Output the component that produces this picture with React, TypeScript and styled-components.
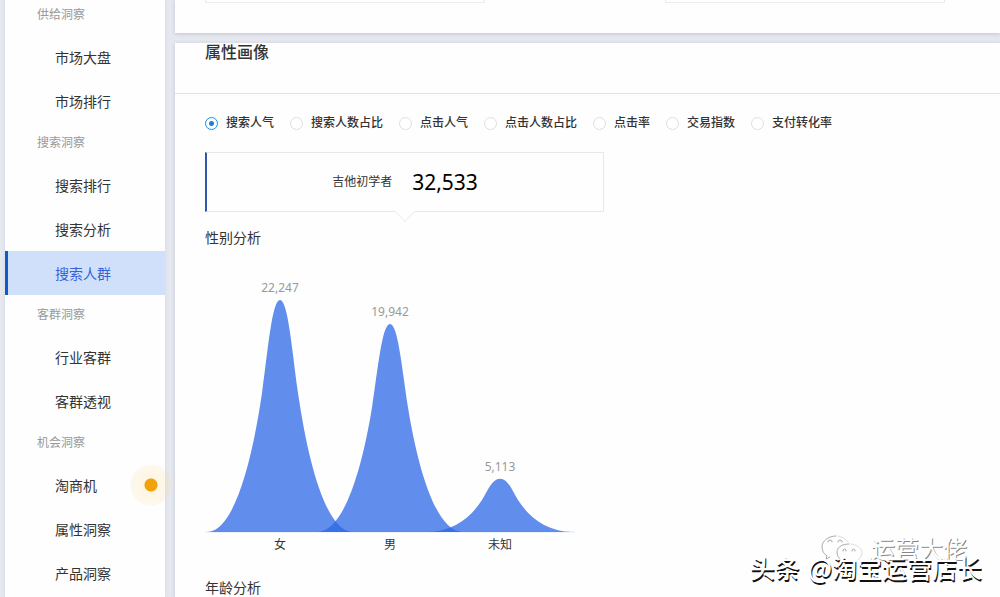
import React, { useState } from "react";
import styled, { createGlobalStyle } from "styled-components";

const GlobalStyle = createGlobalStyle`
  *, *::before, *::after { box-sizing: border-box; }
  body {
    margin: 0;
    background: #e6e8f0;
    color: #333;
    font: 14px/18px "Noto Sans", "Noto Sans CJK SC", sans-serif;
  }
  h2, h3, ul, p, fieldset { margin: 0; padding: 0; }
  ul { list-style: none; }
`;

const Page = styled.div`
  position: relative;
  display: flex;
  gap: 10px;
  min-height: 100vh;
  padding-left: 5px;
  overflow: hidden;
`;

const Sidebar = styled.nav`
  flex: 0 0 160px;
  background: #fefefe;
  box-shadow: 0 0 4px rgba(80, 90, 120, 0.12);
`;

const GroupTitle = styled.p<{ $first?: boolean }>`
  padding: ${(p) => (p.$first ? 5 : 10)}px 0 10px 32px;
  color: #999;
  font-size: 12px;
  line-height: 20px;
`;

const NavLink = styled.a<{ $active?: boolean }>`
  position: relative;
  display: block;
  padding: 2px 0 0 47px;
  border-left: 3px solid ${(p) => (p.$active ? "#0c5bc9" : "transparent")};
  background: ${(p) => (p.$active ? "#d1e0fa" : "transparent")};
  color: ${(p) => (p.$active ? "#3363dc" : "#333")};
  line-height: 42px;
  text-decoration: none;
`;

const NoticeDot = styled.span`
  position: absolute;
  top: 1px;
  right: -7px;
  width: 42px;
  height: 42px;
  border-radius: 50%;
  background: radial-gradient(circle, #f3a108 6px, rgba(250, 205, 100, 0.17) 7px, rgba(250, 215, 130, 0.14) 20px, transparent 21px);
`;

const Main = styled.main`
  flex: 1;
  min-width: 0;
  display: flex;
  flex-direction: column;
  gap: 10px;
`;

const Panel = styled.section`
  background: #fefefe;
  box-shadow: 0 1px 4px rgba(70, 75, 90, 0.22);

  &:last-child { flex: 1; }
`;

const SummaryRow = styled.div`
  display: grid;
  grid-template-columns: 280px 280px;
  gap: 180px;
  padding: 0 30px 30px;
`;

const SummaryBox = styled.div`
  height: 3px;
  border: 1px solid #ebebeb;
  border-top: 0;
`;

const PanelHeader = styled.header`
  padding: 0 30px 32px;
  border-bottom: 1px solid #e3e3e5;
`;

const PanelTitle = styled.h2`
  font-size: 16px;
  font-weight: 500;
  line-height: 18px;
`;

const PanelBody = styled.div`
  padding: 20px 30px 0;
`;

const MetricGroup = styled.fieldset`
  display: flex;
  flex-wrap: wrap;
  gap: 16px;
  margin-bottom: 20px;
  border: 0;
`;

const MetricLabel = styled.label`
  display: flex;
  align-items: center;
  gap: 8px;
  font-size: 12px;
  font-weight: 500;
  white-space: nowrap;
`;

const Radio = styled.input`
  appearance: none;
  width: 13px;
  height: 13px;
  margin: 0;
  border: 1px solid #dedede;
  border-radius: 50%;
  background: #fff;

  &:checked {
    border-color: #2389e0;
    background: radial-gradient(circle, #1c7fdc 2px, #fff 3px);
  }
`;

const CrowdCard = styled.div`
  position: relative;
  display: flex;
  align-items: center;
  justify-content: center;
  gap: 20px;
  max-width: 399px;
  height: 60px;
  margin-bottom: 17px;
  border: 1px solid #e8e8ea;
  border-left: 2px solid #3159ab;

  &::after {
    content: "";
    position: absolute;
    bottom: -8px;
    left: 50%;
    width: 14px;
    height: 14px;
    margin-left: -7px;
    border: solid #eeeef0;
    border-width: 0 1px 1px 0;
    background: #fefefe;
    transform: rotate(45deg);
  }
`;

const CrowdName = styled.span`
  font-size: 12px;
`;

const CrowdValue = styled.strong`
  color: #000;
  font-size: 21px;
  font-weight: 400;
`;

const SectionTitle = styled.h3`
  font-size: 14px;
  font-weight: 400;
  line-height: 18px;
`;

const Chart = styled.svg`
  display: block;
  margin-bottom: 24px;
  font-size: 12px;
  text-anchor: middle;
`;

const Watermark = styled.div`
  position: absolute;
  right: 18px;
  bottom: 15px;
  display: flex;
  gap: 8px;
  color: #fff;
  font-family: "Noto Sans CJK SC", sans-serif;
  font-size: 25px;
  font-weight: 500;
  line-height: 30px;
  white-space: nowrap;
  text-shadow: 1px 2px 0 #111;
`;

const SourceMark = styled.div`
  position: absolute;
  right: 33px;
  bottom: 32px;
  display: flex;
  align-items: center;
  gap: 8px;
  color: #fff;
  font-size: 24px;
  line-height: 30px;
  text-shadow: 1px 1px 0 #888;
`;

type NavGroup = { title: string; items: string[] };

const groups: NavGroup[] = [
  { title: "供给洞察", items: ["市场大盘", "市场排行"] },
  { title: "搜索洞察", items: ["搜索排行", "搜索分析", "搜索人群"] },
  { title: "客群洞察", items: ["行业客群", "客群透视"] },
  { title: "机会洞察", items: ["淘商机", "属性洞察", "产品洞察"] },
];

const metrics = ["搜索人气", "搜索人数占比", "点击人气", "点击人数占比", "点击率", "交易指数", "支付转化率"];

const genders = [
  { name: "女", value: 22247 },
  { name: "男", value: 19942 },
  { name: "未知", value: 5113 },
];

const BASELINE = 285;
const PEAK_HEIGHT = 232;

/* Bell curve centred on cx; the control points are fractions of its height. */
function bell(cx: number, height: number) {
  const y = (depth: number) => BASELINE - height + (depth / PEAK_HEIGHT) * height;
  return [
    `M${cx - 72},${y(232)}`,
    `C${cx - 47},${y(230)} ${cx - 29},${y(168)} ${cx - 18},${y(93)}`,
    `C${cx - 12},${y(50)} ${cx - 8},${y(0)} ${cx},${y(0)}`,
    `C${cx + 8},${y(0)} ${cx + 12},${y(50)} ${cx + 18},${y(93)}`,
    `C${cx + 29},${y(168)} ${cx + 47},${y(230)} ${cx + 72},${y(232)}Z`,
  ].join(" ");
}

function GenderChart() {
  return (
    <Chart width="400" height="308" role="img" aria-label="性别分析">
      <path d={`M0,${BASELINE}H370`} stroke="#a9c0f3" strokeOpacity="0.35" />
      {genders.map((g, i) => {
        const cx = 75 + i * 110;
        const height = (g.value / genders[0].value) * PEAK_HEIGHT;
        return (
          <g key={g.name}>
            <path d={bell(cx, height)} fill="#2a67e5" fillOpacity="0.74" />
            <text x={cx} y={BASELINE - height - 8} fill="#999">{g.value.toLocaleString("en-US")}</text>
            <text x={cx} y={BASELINE + 17} fill="#333">{g.name}</text>
          </g>
        );
      })}
    </Chart>
  );
}

function ChatLogo() {
  return (
    <svg width="42" height="32" viewBox="0 0 42 32" fill="none" stroke="#aaa" strokeLinecap="round" aria-hidden="true">
      <path d="M15 3C7 3 1 8 1 14C1 18 3 21 6 23L5 26L9 24" />
      <path d="M17 3C22 4 25 6 27 9" stroke="#ddd" />
      <path d="M28 11C20 11 16 15 16 19C16 22 17 24 19 26" />
      <path d="M30 11C37 12 41 16 41 20C41 23 39 25 37 27" stroke="#ddd" />
      <path d="M7 9V8Q9 6 11 8V9M17 9V8Q19 6 21 8V9M22 18V17Q24 15 25 17V18M31 18V17Q33 15 34 17V18" />
    </svg>
  );
}

export default function App() {
  const [metric, setMetric] = useState(metrics[0]);

  return (
    <>
      <GlobalStyle />
      <Page>
        <Sidebar>
          {groups.map((group, i) => (
            <div key={group.title}>
              <GroupTitle $first={i === 0}>{group.title}</GroupTitle>
              <ul>
                {group.items.map((item) => (
                  <li key={item}>
                    <NavLink href="#" $active={item === "搜索人群"}>
                      {item}
                      {item === "淘商机" && <NoticeDot />}
                    </NavLink>
                  </li>
                ))}
              </ul>
            </div>
          ))}
        </Sidebar>
        <Main>
          <Panel>
            <SummaryRow>
              <SummaryBox />
              <SummaryBox />
            </SummaryRow>
          </Panel>
          <Panel>
            <PanelHeader>
              <PanelTitle>属性画像</PanelTitle>
            </PanelHeader>
            <PanelBody>
              <MetricGroup aria-label="属性画像">
                {metrics.map((name) => (
                  <MetricLabel key={name}>
                    <Radio type="radio" name="metric" checked={metric === name} onChange={() => setMetric(name)} />
                    {name}
                  </MetricLabel>
                ))}
              </MetricGroup>
              <CrowdCard>
                <CrowdName>吉他初学者</CrowdName>
                <CrowdValue>32,533</CrowdValue>
              </CrowdCard>
              <SectionTitle>性别分析</SectionTitle>
              <GenderChart />
              <SectionTitle>年龄分析</SectionTitle>
            </PanelBody>
          </Panel>
        </Main>
        <SourceMark>
          <ChatLogo />
          运营大佬
        </SourceMark>
        <Watermark>
          <span>头条</span>
          <span>@淘宝运营店长</span>
        </Watermark>
      </Page>
    </>
  );
}
